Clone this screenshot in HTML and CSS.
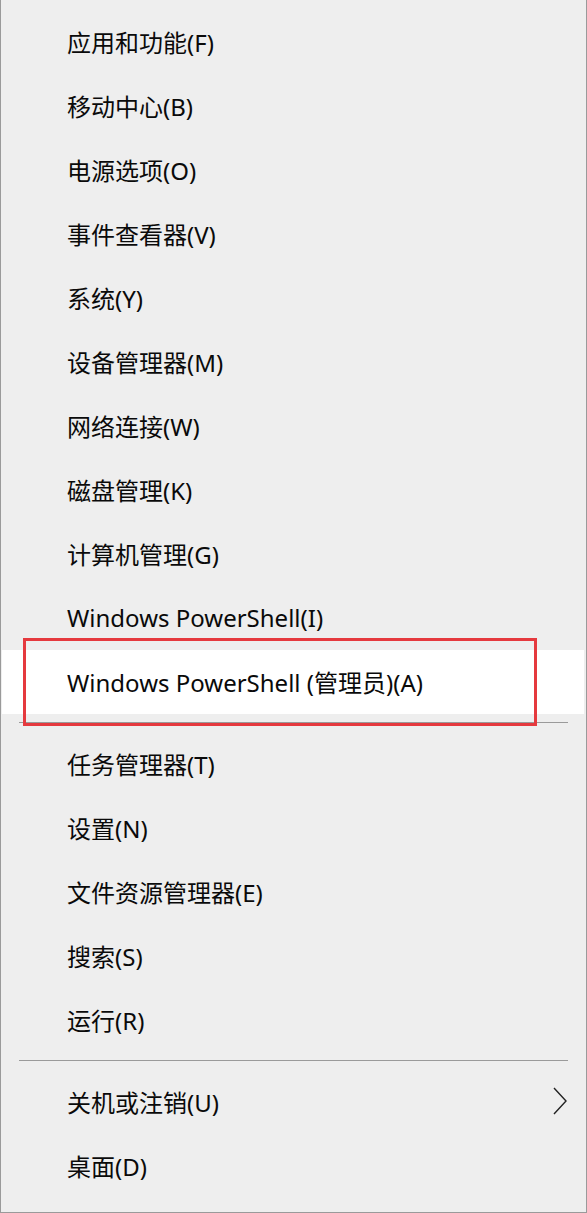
FILE: index.html
```html
<!DOCTYPE html>
<html lang="zh-CN">
<head>
<meta charset="utf-8">
<title>Menu</title>
<link rel="stylesheet" href="styles.css">
</head>
<body>
<div class="menu">
  <div class="item">应用和功能(F)</div>
  <div class="item">移动中心(B)</div>
  <div class="item">电源选项(O)</div>
  <div class="item">事件查看器(V)</div>
  <div class="item">系统(Y)</div>
  <div class="item">设备管理器(M)</div>
  <div class="item">网络连接(W)</div>
  <div class="item">磁盘管理(K)</div>
  <div class="item">计算机管理(G)</div>
  <div class="item">Windows PowerShell(I)</div>
  <div class="item active">Windows PowerShell (管理员)(A)</div>
  <div class="sep"></div>
  <div class="item">任务管理器(T)</div>
  <div class="item">设置(N)</div>
  <div class="item">文件资源管理器(E)</div>
  <div class="item">搜索(S)</div>
  <div class="item">运行(R)</div>
  <div class="sep"></div>
  <div class="item has-sub">关机或注销(U)
    <svg class="chev" width="16" height="28" viewBox="0 0 16 28"><polyline points="2,1 14,14 2,27" fill="none" stroke="#222" stroke-width="1.4"/></svg>
  </div>
  <div class="item">桌面(D)</div>
</div>
</body>
</html>
```

FILE: styles.css
```css
html, body {
  margin: 0;
  padding: 0;
  background: #eeeeee;
}
.menu {
  box-sizing: border-box;
  width: 587px;
  height: 1213px;
  background: #eeeeee;
  border-left: 1px solid #9a9a9a;
  border-right: 1px solid #9a9a9a;
  border-bottom: 1px solid #9a9a9a;
  padding-top: 10px;
  font-family: "Noto Sans", "Noto Sans CJK SC", sans-serif;
  font-size: 24px;
  color: #0a0a0a;
}
.item {
  box-sizing: border-box;
  height: 64px;
  display: flex;
  align-items: center;
  padding-left: 66px;
  padding-right: 18px;
  padding-bottom: 2px;
  white-space: nowrap;
}
.item.active {
  background: #ffffff;
  margin: 0 2px 0 1px;
  padding-left: 65px;
  position: relative;
}
.item.active::after {
  content: "";
  position: absolute;
  box-sizing: border-box;
  left: 21px;
  top: -12px;
  width: 514px;
  height: 88px;
  border: 3px solid #e5393e;
}
.sep {
  height: 1px;
  background: #9a9a9a;
  margin: 8px 18px 9px 18px;
}
.has-sub {
  justify-content: space-between;
}
.chev {
  display: block;
}
```
